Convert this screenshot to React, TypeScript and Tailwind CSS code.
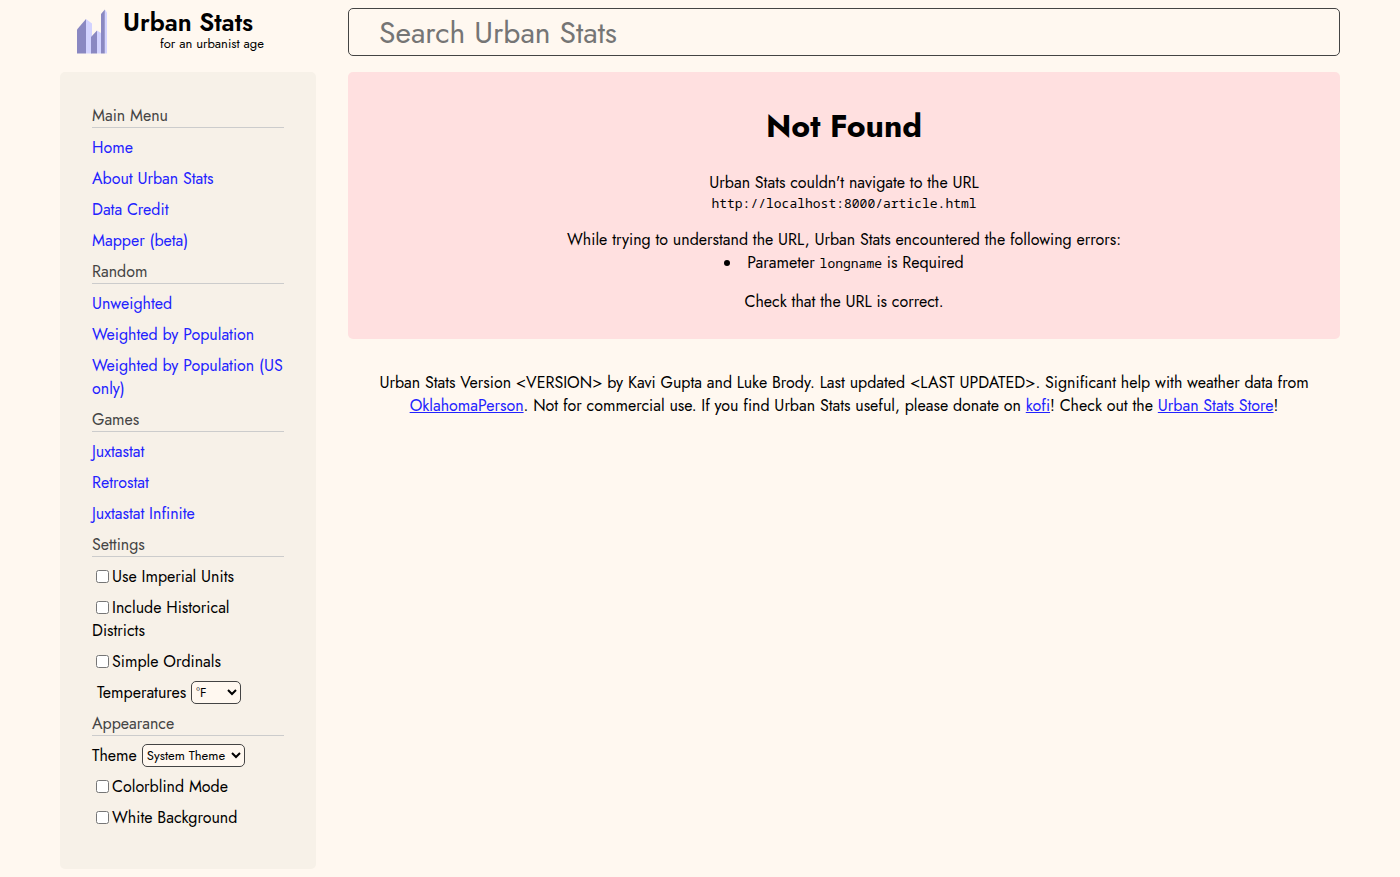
import React from "react";

type Entry =
  | { kind: "link"; label: string; href: string }
  | { kind: "check"; label: string; id: string }
  | { kind: "select"; label: string; id: string; options: string[]; className: string };

const sections: { title: string; entries: Entry[] }[] = [
  {
    title: "Main Menu",
    entries: [
      { kind: "link", label: "Home", href: "#home" },
      { kind: "link", label: "About Urban Stats", href: "#about" },
      { kind: "link", label: "Data Credit", href: "#data-credit" },
      { kind: "link", label: "Mapper (beta)", href: "#mapper" },
    ],
  },
  {
    title: "Random",
    entries: [
      { kind: "link", label: "Unweighted", href: "#unweighted" },
      { kind: "link", label: "Weighted by Population", href: "#weighted" },
      { kind: "link", label: "Weighted by Population (US only)", href: "#weighted-us" },
    ],
  },
  {
    title: "Games",
    entries: [
      { kind: "link", label: "Juxtastat", href: "#juxtastat" },
      { kind: "link", label: "Retrostat", href: "#retrostat" },
      { kind: "link", label: "Juxtastat Infinite", href: "#juxtastat-infinite" },
    ],
  },
  {
    title: "Settings",
    entries: [
      { kind: "check", label: "Use Imperial Units", id: "imperial" },
      { kind: "check", label: "Include Historical Districts", id: "historical" },
      { kind: "check", label: "Simple Ordinals", id: "ordinals" },
      { kind: "select", label: "Temperatures", id: "temperature", options: ["°F", "°C"], className: "w-[50px]" },
    ],
  },
  {
    title: "Appearance",
    entries: [
      {
        kind: "select",
        label: "Theme",
        id: "theme",
        options: ["System Theme", "Light Mode", "Dark Mode"],
        className: "w-[103px]",
      },
      { kind: "check", label: "Colorblind Mode", id: "colorblind" },
      { kind: "check", label: "White Background", id: "white" },
    ],
  },
];

function SidebarEntry({ entry }: { entry: Entry }) {
  if (entry.kind === "link") {
    return (
      <a href={entry.href} className="text-[#2222ff]">
        {entry.label}
      </a>
    );
  }
  if (entry.kind === "check") {
    return (
      <>
        <input id={entry.id} type="checkbox" className="mr-[3px] ml-1 size-[13px] align-[-1px]" />
        <label htmlFor={entry.id}>{entry.label}</label>
      </>
    );
  }
  return (
    <div className={entry.id === "temperature" ? "flex items-center gap-[5px] pl-[5px]" : "flex items-center gap-[5px]"}>
      <label htmlFor={entry.id}>{entry.label}</label>
      <select
        id={entry.id}
        className={`h-[23px] rounded-[5px] border border-[#444444] bg-[#fff8f0] text-[13px] leading-[19px] ${entry.className}`}
      >
        {entry.options.map((option) => (
          <option key={option}>{option}</option>
        ))}
      </select>
    </div>
  );
}

function Logo() {
  return (
    <a href="#home" className="flex h-12 items-start pl-4">
      <svg viewBox="0 0 32 46" className="mt-px h-[46px] w-8 shrink-0" aria-hidden="true">
        <path d="M10 10 16 14.5V44.4H10z" fill="#d3d3ff" />
        <path d="M1 20.5 10 10V44.4H1z" fill="#8a88c2" />
        <path d="M21 21.5 25 24V44.4H21z" fill="#d3d3ff" />
        <path d="M15 28 21 21.5V44.4H15z" fill="#8a88c2" />
        <path d="M28.8 0.5 31 3.5V44.4H28.8z" fill="#d3d3ff" />
        <path d="M25 5 28.8 0.5V44.4H25z" fill="#8a88c2" />
      </svg>
      <span className="flex flex-col pl-[15px]">
        <span className="text-[25px] leading-7 font-semibold">Urban Stats</span>
        <span className="pl-[37px] text-[13px] leading-[15px]">for an urbanist age</span>
      </span>
    </a>
  );
}

export default function App() {
  return (
    <div className="min-h-screen bg-[#fff8f0] px-[60px] pt-2 pb-2 font-[Jost,Lato,sans-serif] text-[16px] leading-[23px] text-black">
      <header className="mb-4 flex gap-8">
        <div className="w-64 shrink-0">
          <Logo />
        </div>
        <input
          type="text"
          aria-label="Search Urban Stats"
          placeholder="Search Urban Stats"
          className="h-12 min-w-0 flex-1 rounded-[5px] border border-[#444444] bg-[#fff8f0] px-[30px] text-[30px] placeholder:text-[#757575]"
        />
      </header>
      <div className="flex items-start gap-8">
        <nav className="w-64 shrink-0 rounded-[5px] bg-[#f7f1e8] p-8">
          {sections.map((section) => (
            <section key={section.title}>
              <h2 className="mb-2 border-b border-[#cccccc] text-[#444444]">{section.title}</h2>
              <ul>
                {section.entries.map((entry) => (
                  <li key={entry.label} className="mb-2">
                    <SidebarEntry entry={entry} />
                  </li>
                ))}
              </ul>
            </section>
          ))}
        </nav>
        <div className="min-w-0 flex-1 text-center">
          <main className="rounded-[5px] bg-[#ffe0e0] px-8 pt-[31px] pb-[26px]">
            <h1 className="mb-[22px] text-[32px] leading-[46px] font-bold">Not Found</h1>
            <p>
              Urban Stats couldn't navigate to the URL
              <code className="mb-4 block font-['Noto_Sans_Mono','Liberation_Mono',monospace] text-[13px] leading-[18px]">
                http://localhost:8000/article.html
              </code>
            </p>
            <p>While trying to understand the URL, Urban Stats encountered the following errors:</p>
            <ul className="mb-4 list-inside list-disc">
              <li>
                Parameter{" "}
                <code className="font-['Noto_Sans_Mono','Liberation_Mono',monospace] text-[13px] leading-[18px]">
                  longname
                </code>{" "}
                is Required
              </li>
            </ul>
            <p>Check that the URL is correct.</p>
          </main>
          <footer className="mt-8 px-6">
            Urban Stats Version &lt;VERSION&gt; by Kavi Gupta and Luke Brody. Last updated &lt;LAST UPDATED&gt;.
            Significant help with weather data from{" "}
            <a href="#oklahoma" className="text-[#2222ff] underline">OklahomaPerson</a>. Not for commercial use. If you
            find Urban Stats useful, please donate on{" "}
            <a href="#kofi" className="text-[#2222ff] underline">kofi</a>! Check out the{" "}
            <a href="#store" className="text-[#2222ff] underline">Urban Stats Store</a>!
          </footer>
        </div>
      </div>
    </div>
  );
}
